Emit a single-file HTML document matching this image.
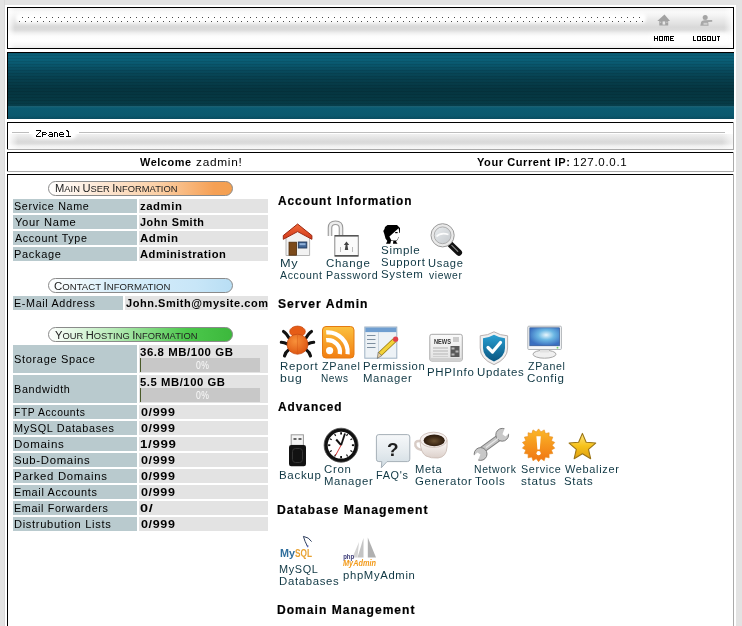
<!DOCTYPE html>
<html><head><meta charset="utf-8"><title>ZPanel</title>
<style>html,body{margin:0;padding:0;width:742px;height:626px;overflow:hidden;background:#e3e3e3}svg{display:block;will-change:transform}</style>
</head><body><svg width="742" height="626" viewBox="0 0 742 626" font-family='"Liberation Sans", sans-serif'><defs><linearGradient id="gTop" gradientUnits="userSpaceOnUse" x1="0" y1="8" x2="0" y2="48">
<stop offset="0" stop-color="#f0f0f0"/><stop offset="0.1" stop-color="#f9f9f9"/><stop offset="0.2" stop-color="#f3f3f3"/>
<stop offset="0.3" stop-color="#e9e9e9"/><stop offset="0.4" stop-color="#e1e1e1"/><stop offset="0.48" stop-color="#d9d9d9"/>
<stop offset="0.55" stop-color="#dcdcdc"/><stop offset="0.62" stop-color="#efefef"/><stop offset="0.7" stop-color="#fcfcfc"/>
<stop offset="0.82" stop-color="#fff"/><stop offset="0.92" stop-color="#f8f8f8"/><stop offset="1" stop-color="#ececec"/></linearGradient>
<filter id="fBlur2" x="-5%" y="-60%" width="110%" height="220%"><feGaussianBlur stdDeviation="1.4"/></filter>
<linearGradient id="gTopL" x1="0" y1="0" x2="1" y2="0"><stop offset="0" stop-color="#fff" stop-opacity="0.9"/><stop offset="1" stop-color="#fff" stop-opacity="0"/></linearGradient>
<linearGradient id="gTopR" x1="0" y1="0" x2="1" y2="0"><stop offset="0" stop-color="#fff" stop-opacity="0"/><stop offset="1" stop-color="#fff" stop-opacity="0.85"/></linearGradient><pattern id="pDots" x="0" y="0" width="6" height="5" patternUnits="userSpaceOnUse">
<rect x="4" y="2" width="1" height="1" fill="#555"/><rect x="1" y="1" width="1" height="1" fill="#555" transform="translate(0,0)"/></pattern><linearGradient id="gBan" gradientUnits="userSpaceOnUse" x1="0" y1="53" x2="0" y2="119">
<stop offset="0" stop-color="#0a566c"/><stop offset="0.03" stop-color="#0b617a"/><stop offset="0.1" stop-color="#0a5f77"/>
<stop offset="0.18" stop-color="#09566c"/><stop offset="0.26" stop-color="#084b5e"/><stop offset="0.38" stop-color="#07404f"/>
<stop offset="0.56" stop-color="#053540"/><stop offset="0.71" stop-color="#063843"/><stop offset="0.8" stop-color="#073e4b"/>
<stop offset="0.81" stop-color="#1d687d"/><stop offset="0.83" stop-color="#0b5b72"/><stop offset="0.95" stop-color="#0a586e"/><stop offset="1" stop-color="#094c60"/></linearGradient>
<pattern id="pStripe" x="0" y="53" width="4" height="3" patternUnits="userSpaceOnUse"><rect x="0" y="2" width="4" height="1" fill="#000" fill-opacity="0.09"/></pattern><linearGradient id="gCr" gradientUnits="userSpaceOnUse" x1="0" y1="123" x2="0" y2="149">
<stop offset="0" stop-color="#fdfdfd"/><stop offset="0.38" stop-color="#fff"/><stop offset="0.42" stop-color="#fff"/>
<stop offset="0.44" stop-color="#efefef"/><stop offset="0.6" stop-color="#e2e2e2"/><stop offset="0.72" stop-color="#d9d9d9"/>
<stop offset="0.8" stop-color="#dddddd"/><stop offset="0.88" stop-color="#f0f0f0"/><stop offset="1" stop-color="#f7f7f7"/></linearGradient><filter id="fBlur" x="-20%" y="-50%" width="140%" height="200%"><feGaussianBlur stdDeviation="1.6"/></filter><linearGradient id="gFadeL" x1="0" y1="0" x2="1" y2="0"><stop offset="0" stop-color="#fff" stop-opacity="1"/><stop offset="1" stop-color="#fff" stop-opacity="0"/></linearGradient><linearGradient id="gFadeR" x1="0" y1="0" x2="1" y2="0"><stop offset="0" stop-color="#fff" stop-opacity="0"/><stop offset="1" stop-color="#fff" stop-opacity="0.7"/></linearGradient><linearGradient id="gOr" x1="0" y1="0" x2="1" y2="0"><stop offset="0" stop-color="#fff"/><stop offset="0.3" stop-color="#fde6d2"/><stop offset="0.6" stop-color="#fbcfa5"/><stop offset="0.9" stop-color="#f5a055"/><stop offset="1" stop-color="#f4a050"/></linearGradient>
<linearGradient id="gBl" x1="0" y1="0" x2="1" y2="0"><stop offset="0" stop-color="#fff"/><stop offset="0.35" stop-color="#d8eefa"/><stop offset="0.8" stop-color="#c8e6f8"/><stop offset="1" stop-color="#b8def4"/></linearGradient>
<linearGradient id="gGr" x1="0" y1="0" x2="1" y2="0"><stop offset="0" stop-color="#fff"/><stop offset="0.35" stop-color="#b8ecb8"/><stop offset="0.75" stop-color="#4cc84c"/><stop offset="1" stop-color="#3cb83c"/></linearGradient>
<linearGradient id="gRoof" x1="0" y1="0" x2="0" y2="1"><stop offset="0" stop-color="#f06a3a"/><stop offset="1" stop-color="#d2381a"/></linearGradient>
<linearGradient id="gLens" x1="0" y1="0" x2="1" y2="1"><stop offset="0" stop-color="#eef0f2"/><stop offset="0.5" stop-color="#d6dadd"/><stop offset="1" stop-color="#c2c6ca"/></linearGradient>
<radialGradient id="gBug" cx="0.4" cy="0.35" r="0.7"><stop offset="0" stop-color="#f8913a"/><stop offset="1" stop-color="#dd5410"/></radialGradient>
<linearGradient id="gRss" x1="0" y1="0" x2="0" y2="1"><stop offset="0" stop-color="#fbc13e"/><stop offset="1" stop-color="#f27e12"/></linearGradient>
<linearGradient id="gShield" x1="0" y1="0" x2="0" y2="1"><stop offset="0" stop-color="#2a9fd2"/><stop offset="1" stop-color="#0a5580"/></linearGradient>
<radialGradient id="gScreen" cx="0.55" cy="0.4" r="0.6"><stop offset="0" stop-color="#e8f6fc"/><stop offset="0.45" stop-color="#6cb8e4"/><stop offset="1" stop-color="#3a6fc0"/></radialGradient>
<linearGradient id="gBubble" x1="0" y1="0" x2="0" y2="1"><stop offset="0" stop-color="#f6f8fa"/><stop offset="0.55" stop-color="#e4eaee"/><stop offset="1" stop-color="#cfdbe2"/></linearGradient>
<linearGradient id="gBurst" x1="0" y1="0" x2="0" y2="1"><stop offset="0" stop-color="#fbb828"/><stop offset="1" stop-color="#f07412"/></linearGradient>
<linearGradient id="gStar" x1="0" y1="0" x2="0" y2="1"><stop offset="0" stop-color="#ffe680"/><stop offset="0.5" stop-color="#f6c21a"/><stop offset="1" stop-color="#e0a010"/></linearGradient>
<radialGradient id="gCoffee" cx="0.5" cy="0.55" r="0.55"><stop offset="0" stop-color="#6a5030"/><stop offset="0.7" stop-color="#3a2614"/><stop offset="1" stop-color="#2a1a0c"/></radialGradient>
<linearGradient id="gCup" x1="0" y1="0" x2="0" y2="1"><stop offset="0" stop-color="#fdfbfa"/><stop offset="1" stop-color="#dcd0ca"/></linearGradient>
<linearGradient id="gPaper" x1="0" y1="0" x2="0" y2="1"><stop offset="0" stop-color="#fafafa"/><stop offset="1" stop-color="#e2e2e2"/></linearGradient>
</defs><rect x="0" y="0" width="742" height="626" fill="#e3e3e3" />
<rect x="4" y="0" width="1" height="626" fill="#d9d9d9" />
<rect x="5" y="5" width="731" height="626" fill="#fff" />
<rect x="7" y="7" width="727" height="42" fill="#000" />
<rect x="8" y="8" width="725" height="40" fill="url(#gTop)" />
<rect x="16" y="13.5" width="630" height="9.5" rx="4" fill="#fff" filter="url(#fBlur2)"/>
<rect x="649" y="33" width="80" height="13" rx="5" fill="#fff" opacity="0.7" filter="url(#fBlur2)"/>
<rect x="8" y="8" width="7" height="40" fill="url(#gTopL)" />
<rect x="724" y="8" width="9" height="40" fill="url(#gTopR)" />
<g fill="#4a4a4a">
<rect x="22" y="17" width="1" height="1"/>
<rect x="19" y="21" width="1" height="1"/>
<rect x="28" y="17" width="1" height="1"/>
<rect x="25" y="21" width="1" height="1"/>
<rect x="34" y="17" width="1" height="1"/>
<rect x="31" y="21" width="1" height="1"/>
<rect x="40" y="17" width="1" height="1"/>
<rect x="37" y="21" width="1" height="1"/>
<rect x="46" y="17" width="1" height="1"/>
<rect x="43" y="21" width="1" height="1"/>
<rect x="52" y="17" width="1" height="1"/>
<rect x="49" y="21" width="1" height="1"/>
<rect x="58" y="17" width="1" height="1"/>
<rect x="55" y="21" width="1" height="1"/>
<rect x="64" y="17" width="1" height="1"/>
<rect x="61" y="21" width="1" height="1"/>
<rect x="70" y="17" width="1" height="1"/>
<rect x="67" y="21" width="1" height="1"/>
<rect x="76" y="17" width="1" height="1"/>
<rect x="73" y="21" width="1" height="1"/>
<rect x="82" y="17" width="1" height="1"/>
<rect x="79" y="21" width="1" height="1"/>
<rect x="88" y="17" width="1" height="1"/>
<rect x="85" y="21" width="1" height="1"/>
<rect x="94" y="17" width="1" height="1"/>
<rect x="91" y="21" width="1" height="1"/>
<rect x="100" y="17" width="1" height="1"/>
<rect x="97" y="21" width="1" height="1"/>
<rect x="106" y="17" width="1" height="1"/>
<rect x="103" y="21" width="1" height="1"/>
<rect x="112" y="17" width="1" height="1"/>
<rect x="109" y="21" width="1" height="1"/>
<rect x="118" y="17" width="1" height="1"/>
<rect x="115" y="21" width="1" height="1"/>
<rect x="124" y="17" width="1" height="1"/>
<rect x="121" y="21" width="1" height="1"/>
<rect x="130" y="17" width="1" height="1"/>
<rect x="127" y="21" width="1" height="1"/>
<rect x="136" y="17" width="1" height="1"/>
<rect x="133" y="21" width="1" height="1"/>
<rect x="142" y="17" width="1" height="1"/>
<rect x="139" y="21" width="1" height="1"/>
<rect x="148" y="17" width="1" height="1"/>
<rect x="145" y="21" width="1" height="1"/>
<rect x="154" y="17" width="1" height="1"/>
<rect x="151" y="21" width="1" height="1"/>
<rect x="160" y="17" width="1" height="1"/>
<rect x="157" y="21" width="1" height="1"/>
<rect x="166" y="17" width="1" height="1"/>
<rect x="163" y="21" width="1" height="1"/>
<rect x="172" y="17" width="1" height="1"/>
<rect x="169" y="21" width="1" height="1"/>
<rect x="178" y="17" width="1" height="1"/>
<rect x="175" y="21" width="1" height="1"/>
<rect x="184" y="17" width="1" height="1"/>
<rect x="181" y="21" width="1" height="1"/>
<rect x="190" y="17" width="1" height="1"/>
<rect x="187" y="21" width="1" height="1"/>
<rect x="196" y="17" width="1" height="1"/>
<rect x="193" y="21" width="1" height="1"/>
<rect x="202" y="17" width="1" height="1"/>
<rect x="199" y="21" width="1" height="1"/>
<rect x="208" y="17" width="1" height="1"/>
<rect x="205" y="21" width="1" height="1"/>
<rect x="214" y="17" width="1" height="1"/>
<rect x="211" y="21" width="1" height="1"/>
<rect x="220" y="17" width="1" height="1"/>
<rect x="217" y="21" width="1" height="1"/>
<rect x="226" y="17" width="1" height="1"/>
<rect x="223" y="21" width="1" height="1"/>
<rect x="232" y="17" width="1" height="1"/>
<rect x="229" y="21" width="1" height="1"/>
<rect x="238" y="17" width="1" height="1"/>
<rect x="235" y="21" width="1" height="1"/>
<rect x="244" y="17" width="1" height="1"/>
<rect x="241" y="21" width="1" height="1"/>
<rect x="250" y="17" width="1" height="1"/>
<rect x="247" y="21" width="1" height="1"/>
<rect x="256" y="17" width="1" height="1"/>
<rect x="253" y="21" width="1" height="1"/>
<rect x="262" y="17" width="1" height="1"/>
<rect x="259" y="21" width="1" height="1"/>
<rect x="268" y="17" width="1" height="1"/>
<rect x="265" y="21" width="1" height="1"/>
<rect x="274" y="17" width="1" height="1"/>
<rect x="271" y="21" width="1" height="1"/>
<rect x="280" y="17" width="1" height="1"/>
<rect x="277" y="21" width="1" height="1"/>
<rect x="286" y="17" width="1" height="1"/>
<rect x="283" y="21" width="1" height="1"/>
<rect x="292" y="17" width="1" height="1"/>
<rect x="289" y="21" width="1" height="1"/>
<rect x="298" y="17" width="1" height="1"/>
<rect x="295" y="21" width="1" height="1"/>
<rect x="304" y="17" width="1" height="1"/>
<rect x="301" y="21" width="1" height="1"/>
<rect x="310" y="17" width="1" height="1"/>
<rect x="307" y="21" width="1" height="1"/>
<rect x="316" y="17" width="1" height="1"/>
<rect x="313" y="21" width="1" height="1"/>
<rect x="322" y="17" width="1" height="1"/>
<rect x="319" y="21" width="1" height="1"/>
<rect x="328" y="17" width="1" height="1"/>
<rect x="325" y="21" width="1" height="1"/>
<rect x="334" y="17" width="1" height="1"/>
<rect x="331" y="21" width="1" height="1"/>
<rect x="340" y="17" width="1" height="1"/>
<rect x="337" y="21" width="1" height="1"/>
<rect x="346" y="17" width="1" height="1"/>
<rect x="343" y="21" width="1" height="1"/>
<rect x="352" y="17" width="1" height="1"/>
<rect x="349" y="21" width="1" height="1"/>
<rect x="358" y="17" width="1" height="1"/>
<rect x="355" y="21" width="1" height="1"/>
<rect x="364" y="17" width="1" height="1"/>
<rect x="361" y="21" width="1" height="1"/>
<rect x="370" y="17" width="1" height="1"/>
<rect x="367" y="21" width="1" height="1"/>
<rect x="376" y="17" width="1" height="1"/>
<rect x="373" y="21" width="1" height="1"/>
<rect x="382" y="17" width="1" height="1"/>
<rect x="379" y="21" width="1" height="1"/>
<rect x="388" y="17" width="1" height="1"/>
<rect x="385" y="21" width="1" height="1"/>
<rect x="394" y="17" width="1" height="1"/>
<rect x="391" y="21" width="1" height="1"/>
<rect x="400" y="17" width="1" height="1"/>
<rect x="397" y="21" width="1" height="1"/>
<rect x="406" y="17" width="1" height="1"/>
<rect x="403" y="21" width="1" height="1"/>
<rect x="412" y="17" width="1" height="1"/>
<rect x="409" y="21" width="1" height="1"/>
<rect x="418" y="17" width="1" height="1"/>
<rect x="415" y="21" width="1" height="1"/>
<rect x="424" y="17" width="1" height="1"/>
<rect x="421" y="21" width="1" height="1"/>
<rect x="430" y="17" width="1" height="1"/>
<rect x="427" y="21" width="1" height="1"/>
<rect x="436" y="17" width="1" height="1"/>
<rect x="433" y="21" width="1" height="1"/>
<rect x="442" y="17" width="1" height="1"/>
<rect x="439" y="21" width="1" height="1"/>
<rect x="448" y="17" width="1" height="1"/>
<rect x="445" y="21" width="1" height="1"/>
<rect x="454" y="17" width="1" height="1"/>
<rect x="451" y="21" width="1" height="1"/>
<rect x="460" y="17" width="1" height="1"/>
<rect x="457" y="21" width="1" height="1"/>
<rect x="466" y="17" width="1" height="1"/>
<rect x="463" y="21" width="1" height="1"/>
<rect x="472" y="17" width="1" height="1"/>
<rect x="469" y="21" width="1" height="1"/>
<rect x="478" y="17" width="1" height="1"/>
<rect x="475" y="21" width="1" height="1"/>
<rect x="484" y="17" width="1" height="1"/>
<rect x="481" y="21" width="1" height="1"/>
<rect x="490" y="17" width="1" height="1"/>
<rect x="487" y="21" width="1" height="1"/>
<rect x="496" y="17" width="1" height="1"/>
<rect x="493" y="21" width="1" height="1"/>
<rect x="502" y="17" width="1" height="1"/>
<rect x="499" y="21" width="1" height="1"/>
<rect x="508" y="17" width="1" height="1"/>
<rect x="505" y="21" width="1" height="1"/>
<rect x="514" y="17" width="1" height="1"/>
<rect x="511" y="21" width="1" height="1"/>
<rect x="520" y="17" width="1" height="1"/>
<rect x="517" y="21" width="1" height="1"/>
<rect x="526" y="17" width="1" height="1"/>
<rect x="523" y="21" width="1" height="1"/>
<rect x="532" y="17" width="1" height="1"/>
<rect x="529" y="21" width="1" height="1"/>
<rect x="538" y="17" width="1" height="1"/>
<rect x="535" y="21" width="1" height="1"/>
<rect x="544" y="17" width="1" height="1"/>
<rect x="541" y="21" width="1" height="1"/>
<rect x="550" y="17" width="1" height="1"/>
<rect x="547" y="21" width="1" height="1"/>
<rect x="556" y="17" width="1" height="1"/>
<rect x="553" y="21" width="1" height="1"/>
<rect x="561" y="17" width="1" height="1"/>
<rect x="559" y="21" width="1" height="1"/>
<rect x="567" y="17" width="1" height="1"/>
<rect x="564" y="21" width="1" height="1"/>
<rect x="573" y="17" width="1" height="1"/>
<rect x="570" y="21" width="1" height="1"/>
<rect x="579" y="17" width="1" height="1"/>
<rect x="576" y="21" width="1" height="1"/>
<rect x="585" y="17" width="1" height="1"/>
<rect x="582" y="21" width="1" height="1"/>
<rect x="591" y="17" width="1" height="1"/>
<rect x="588" y="21" width="1" height="1"/>
<rect x="597" y="17" width="1" height="1"/>
<rect x="594" y="21" width="1" height="1"/>
<rect x="603" y="17" width="1" height="1"/>
<rect x="600" y="21" width="1" height="1"/>
<rect x="609" y="17" width="1" height="1"/>
<rect x="606" y="21" width="1" height="1"/>
<rect x="615" y="17" width="1" height="1"/>
<rect x="612" y="21" width="1" height="1"/>
<rect x="621" y="17" width="1" height="1"/>
<rect x="618" y="21" width="1" height="1"/>
<rect x="627" y="17" width="1" height="1"/>
<rect x="624" y="21" width="1" height="1"/>
<rect x="633" y="17" width="1" height="1"/>
<rect x="630" y="21" width="1" height="1"/>
<rect x="639" y="17" width="1" height="1"/>
<rect x="636" y="21" width="1" height="1"/>
<rect x="642" y="21" width="1" height="1"/>
</g>
<rect x="7" y="52" width="727" height="67" fill="#000" />
<rect x="8" y="53" width="726" height="66" fill="url(#gBan)" />
<rect x="8" y="53" width="726" height="54" fill="url(#pStripe)" />
<rect x="7" y="122" width="727" height="28" fill="#aaa" />
<rect x="7" y="122" width="726" height="27" fill="#000" />
<rect x="8" y="123" width="725" height="26" fill="url(#gCr)" />
<rect x="31" y="126" width="46" height="13" rx="6" fill="#fff" filter="url(#fBlur)"/>
<rect x="8" y="123" width="10" height="26" fill="url(#gFadeL)" />
<rect x="722" y="123" width="11" height="26" fill="url(#gFadeR)" />
<rect x="12" y="132" width="17" height="1" fill="#bdbdbd" />
<rect x="79" y="132" width="646" height="1" fill="#bdbdbd" />
<rect x="8" y="133" width="725" height="1" fill="#fff" />
<rect x="7" y="152" width="727" height="20" fill="#aaa" />
<rect x="7" y="152" width="726" height="19" fill="#000" />
<rect x="8" y="153" width="725" height="18" fill="#fff" />
<rect x="7" y="174" width="727" height="460" fill="#aaa" />
<rect x="7" y="174" width="726" height="459" fill="#000" />
<rect x="8" y="175" width="725" height="458" fill="#fff" />
<rect x="48.5" y="181.5" width="184" height="14" rx="7" ry="7" fill="url(#gOr)" stroke="#8a8a8a" stroke-width="1"/>
<rect x="48.5" y="278.5" width="184" height="14" rx="7" ry="7" fill="url(#gBl)" stroke="#8a8a8a" stroke-width="1"/>
<rect x="48.5" y="327.5" width="184" height="14" rx="7" ry="7" fill="url(#gGr)" stroke="#8a8a8a" stroke-width="1"/>
<rect x="13" y="199" width="124" height="14" fill="#b9cace" />
<rect x="139" y="199" width="129" height="14" fill="#e3e3e3" />
<rect x="13" y="215" width="124" height="14" fill="#b9cace" />
<rect x="139" y="215" width="129" height="14" fill="#e3e3e3" />
<rect x="13" y="231" width="124" height="14" fill="#b9cace" />
<rect x="139" y="231" width="129" height="14" fill="#e3e3e3" />
<rect x="13" y="247" width="124" height="14" fill="#b9cace" />
<rect x="139" y="247" width="129" height="14" fill="#e3e3e3" />
<rect x="13" y="296" width="110" height="14" fill="#b9cace" />
<rect x="125" y="296" width="143" height="14" fill="#e3e3e3" />
<rect x="13" y="345" width="124" height="28" fill="#b9cace" />
<rect x="139" y="345" width="129" height="28" fill="#e3e3e3" />
<rect x="13" y="375" width="124" height="28" fill="#b9cace" />
<rect x="139" y="375" width="129" height="28" fill="#e3e3e3" />
<rect x="140" y="358" width="120" height="14" fill="#c8c8c8" />
<rect x="140" y="358" width="1" height="14" fill="#4a5a2a" />
<rect x="140" y="388" width="120" height="14" fill="#c8c8c8" />
<rect x="140" y="388" width="1" height="14" fill="#4a5a2a" />
<rect x="13" y="405" width="124" height="14" fill="#b9cace" />
<rect x="139" y="405" width="129" height="14" fill="#e3e3e3" />
<rect x="13" y="421" width="124" height="14" fill="#b9cace" />
<rect x="139" y="421" width="129" height="14" fill="#e3e3e3" />
<rect x="13" y="437" width="124" height="14" fill="#b9cace" />
<rect x="139" y="437" width="129" height="14" fill="#e3e3e3" />
<rect x="13" y="453" width="124" height="14" fill="#b9cace" />
<rect x="139" y="453" width="129" height="14" fill="#e3e3e3" />
<rect x="13" y="469" width="124" height="14" fill="#b9cace" />
<rect x="139" y="469" width="129" height="14" fill="#e3e3e3" />
<rect x="13" y="485" width="124" height="14" fill="#b9cace" />
<rect x="139" y="485" width="129" height="14" fill="#e3e3e3" />
<rect x="13" y="501" width="124" height="14" fill="#b9cace" />
<rect x="139" y="501" width="129" height="14" fill="#e3e3e3" />
<rect x="13" y="517" width="124" height="14" fill="#b9cace" />
<rect x="139" y="517" width="129" height="14" fill="#e3e3e3" />
<polygon points="286,237 297.6,228 309.6,237 309.6,255.5 286,255.5" fill="#f2f2f2" stroke="#b4b4b4" stroke-width="1"/>
<rect x="289" y="242.2" width="7.5" height="13" fill="#7c4a1a" stroke="#4e2c0c" stroke-width="0.8"/>
<rect x="298.3" y="242" width="8.5" height="6" fill="#3f6596" stroke="#23385a" stroke-width="0.9"/>
<rect x="299.5" y="243.2" width="6" height="2" fill="#8fb0d8"/>
<polygon points="283.3,235.5 297.6,224 311.9,235.5 311.9,239.3 297.6,231.6 283.3,239.3" fill="url(#gRoof)" stroke="#9a2812" stroke-width="1" stroke-linejoin="round"/>
<path d="M330,236 V228 Q330,222.8 335.5,222.8 Q341,222.8 341,228 V236" fill="none" stroke="#9a9a9a" stroke-width="4.6"/>
<path d="M330,236 V228 Q330,222.8 335.5,222.8 Q341,222.8 341,228 V236" fill="none" stroke="#ececec" stroke-width="2.4"/>
<rect x="334.8" y="235.5" width="23.5" height="20.5" fill="#fbfbfb" stroke="#8a8a8a" stroke-width="1"/>
<rect x="334.8" y="235" width="23.5" height="1.6" fill="#555"/>
<rect x="334.8" y="255" width="23.5" height="1.6" fill="#555"/>
<polygon points="346.5,241.5 343.8,245 345.6,245 344.8,250 348.2,250 347.4,245 349.2,245" fill="#444"/>
<rect x="340" y="247" width="1" height="5" fill="#bbb"/><rect x="352" y="247" width="1" height="5" fill="#bbb"/>
<path d="M387.5,225 H397 L400,228 V232.5 L398.5,233.5 L398.5,238 L397,240.5 L396,241.5 L397.5,243.8 L393,243.8 L393.3,241 L391,241 L390.3,243.8 L386,243.8 L387.3,241 L385.5,238.5 L384.3,234 L383.3,231 L384.5,229 L385,227 Z" fill="#000"/>
<path d="M398.6,228.2 L389.4,236.4 L391.4,240.6 L396.6,240.6 L397.9,238.6 L398.3,237.2 L400.4,235.7 L399.3,233.9 L399.1,231 Z" fill="#fff"/>
<rect x="395.2" y="232" width="2.4" height="1.2" fill="#000"/>
<line x1="451" y1="245" x2="458.8" y2="252.5" stroke="#111" stroke-width="6.5" stroke-linecap="round"/>
<line x1="451.8" y1="245.3" x2="457.8" y2="251.3" stroke="#888" stroke-width="1.2" stroke-linecap="round"/>
<circle cx="442.6" cy="235.3" r="10" fill="url(#gLens)" stroke="#e9e9e9" stroke-width="3"/>
<circle cx="442.6" cy="235.3" r="11.6" fill="none" stroke="#9a9a9a" stroke-width="1"/>
<circle cx="442.6" cy="235.3" r="8.4" fill="none" stroke="#a8a8a8" stroke-width="0.9"/>
<path d="M436.5,236.5 Q441,232 448.5,234.5" fill="none" stroke="#fff" stroke-width="1.6" opacity="0.9"/>
<g stroke="#111" stroke-width="3.1" stroke-linecap="round" fill="none"><path d="M283.5,331.5 Q286,333 289,338"/><path d="M281.3,342.3 Q284,342.5 287.5,344"/><path d="M284.5,356 Q285.5,352 289,349.5"/><path d="M311.5,331.5 Q309,333 306,338"/><path d="M313.7,342.3 Q311,342.5 307.5,344"/><path d="M310.5,356 Q309.5,352 306,349.5"/></g>
<ellipse cx="297.5" cy="331.5" rx="7.8" ry="5.4" fill="#e65c16" stroke="#c84810" stroke-width="0.8"/>
<ellipse cx="297.5" cy="344.2" rx="10.5" ry="10" fill="url(#gBug)" stroke="#c64a10" stroke-width="0.8"/>
<path d="M297.5,335 V353" stroke="#d05010" stroke-width="0.6" opacity="0.6"/>
<rect x="322.5" y="326.5" width="31.5" height="31.5" rx="3.5" fill="url(#gRss)" stroke="#e47a12" stroke-width="1"/>
<circle cx="329.6" cy="350.6" r="3.6" fill="#fff"/>
<path d="M326.2,340.2 A12,12 0 0 1 339.8,354.2" fill="none" stroke="#fff" stroke-width="4.2"/>
<path d="M326.2,332.4 A20,20 0 0 1 347.6,354.2" fill="none" stroke="#fff" stroke-width="4.2"/>
<rect x="364.8" y="327" width="32" height="31.2" fill="#edf2f6" stroke="#9fb1c4" stroke-width="1"/>
<rect x="365.3" y="327.5" width="31" height="4.6" fill="#6f9ed0"/>
<line x1="378.5" y1="332" x2="378.5" y2="357.7" stroke="#c8d4de" stroke-width="1"/>
<g stroke="#7d8fa0" stroke-width="1"><line x1="367" y1="335.5" x2="375.5" y2="335.5"/><line x1="367" y1="339.5" x2="375.5" y2="339.5"/><line x1="367" y1="343.5" x2="375.5" y2="343.5"/><line x1="367" y1="347.5" x2="375.5" y2="347.5"/></g>
<line x1="380" y1="354" x2="394.5" y2="340.3" stroke="#9a7a10" stroke-width="5" stroke-linecap="butt"/>
<line x1="380" y1="354" x2="394.5" y2="340.3" stroke="#f2d23a" stroke-width="3.4"/>
<polygon points="377.3,358.4 378.2,352.2 381.8,355.6" fill="#e8d0a0" stroke="#555" stroke-width="0.6"/>
<circle cx="395.6" cy="339.2" r="2.6" fill="#e0404a"/>
<rect x="429.8" y="334.3" width="32.5" height="26.8" rx="2" fill="url(#gPaper)" stroke="#a8a8a8" stroke-width="1"/>
<rect x="430.5" y="358" width="31" height="3" fill="#d0d0d0"/>
<text x="434" y="344.2" font-size="7.5" font-weight="bold" fill="#333" style="font-family:'Liberation Sans',sans-serif" textLength="17" lengthAdjust="spacingAndGlyphs">NEWS</text>
<rect x="453" y="337" width="6" height="5" fill="#ccc"/>
<rect x="450.5" y="346" width="9" height="11" fill="#5a5a5a"/>
<g fill="#b8b8b8"><rect x="451.5" y="347.5" width="3" height="2"/><rect x="455.5" y="350.5" width="3" height="2"/><rect x="451.5" y="353.5" width="3" height="2"/></g>
<g fill="#cfcfcf"><rect x="433" y="347" width="15" height="2"/><rect x="433" y="350" width="15" height="2"/><rect x="433" y="353" width="15" height="2"/><rect x="433" y="356" width="15" height="1"/></g>
<path d="M494,331.8 Q500,335.5 507.6,335.8 V348 Q507.6,359 494,364.6 Q480.2,359 480.2,348 V335.8 Q488,335.5 494,331.8 Z" fill="#f0f0f0" stroke="#b8b0b0" stroke-width="1"/>
<path d="M494,334.8 Q499.5,338 505,338.3 V348 Q505,357 494,361.6 Q483,357 483,348 V338.3 Q488.5,338 494,334.8 Z" fill="url(#gShield)"/>
<path d="M488,347.5 L492.5,352 L500.5,342.5" fill="none" stroke="#fff" stroke-width="3.2" stroke-linecap="round" stroke-linejoin="round"/>
<ellipse cx="544.5" cy="354.2" rx="11.5" ry="4" fill="#f0f0f0" stroke="#a8a8a8" stroke-width="1"/>
<rect x="540" y="349" width="9" height="3.5" fill="#e2e2e2"/>
<rect x="527.8" y="326.2" width="33.6" height="23.3" rx="1" fill="#f4f6f8" stroke="#b0b4b8" stroke-width="1"/>
<rect x="529.8" y="327.8" width="29.8" height="18" fill="url(#gScreen)" stroke="#2a4f8a" stroke-width="0.6"/>
<circle cx="557.5" cy="347.7" r="0.9" fill="#70d060"/>
<rect x="291.2" y="434.8" width="12.2" height="10.5" fill="#f4f4f4" stroke="#9a9a9a" stroke-width="1"/>
<rect x="293.5" y="438" width="3" height="2" fill="#666"/><rect x="298.5" y="438" width="3" height="2" fill="#666"/>
<rect x="289" y="445" width="17" height="21.2" rx="2.2" fill="#121212"/>
<rect x="292.5" y="448.5" width="10" height="14" rx="3" fill="none" stroke="#333" stroke-width="1"/>
<circle cx="341.1" cy="445.2" r="15.2" fill="#fff" stroke="#111" stroke-width="3.6"/>
<circle cx="341.1" cy="445.2" r="17" fill="none" stroke="#555" stroke-width="0.8"/>
<line x1="341.10" y1="434.40" x2="341.10" y2="432.20" stroke="#111" stroke-width="1.8"/>
<line x1="346.50" y1="435.85" x2="347.60" y2="433.94" stroke="#111" stroke-width="1.2"/>
<line x1="350.45" y1="439.80" x2="352.36" y2="438.70" stroke="#111" stroke-width="1.2"/>
<line x1="351.90" y1="445.20" x2="354.10" y2="445.20" stroke="#111" stroke-width="1.8"/>
<line x1="350.45" y1="450.60" x2="352.36" y2="451.70" stroke="#111" stroke-width="1.2"/>
<line x1="346.50" y1="454.55" x2="347.60" y2="456.46" stroke="#111" stroke-width="1.2"/>
<line x1="341.10" y1="456.00" x2="341.10" y2="458.20" stroke="#111" stroke-width="1.8"/>
<line x1="335.70" y1="454.55" x2="334.60" y2="456.46" stroke="#111" stroke-width="1.2"/>
<line x1="331.75" y1="450.60" x2="329.84" y2="451.70" stroke="#111" stroke-width="1.2"/>
<line x1="330.30" y1="445.20" x2="328.10" y2="445.20" stroke="#111" stroke-width="1.8"/>
<line x1="331.75" y1="439.80" x2="329.84" y2="438.70" stroke="#111" stroke-width="1.2"/>
<line x1="335.70" y1="435.85" x2="334.60" y2="433.94" stroke="#111" stroke-width="1.2"/>
<line x1="341.1" y1="445.2" x2="336.2" y2="439.5" stroke="#111" stroke-width="2"/>
<line x1="341.1" y1="445.2" x2="345" y2="433.5" stroke="#111" stroke-width="1.8"/>
<line x1="341.1" y1="445.2" x2="335.5" y2="455.5" stroke="#d02020" stroke-width="0.9"/>
<path d="M378.8,434.6 H407.4 Q409.8,434.6 409.8,437 V459.2 Q409.8,461.6 407.4,461.6 H387 L381.3,467.8 L381.8,461.6 H378.8 Q376.4,461.6 376.4,459.2 V437 Q376.4,434.6 378.8,434.6 Z" fill="url(#gBubble)" stroke="#a6b0b8" stroke-width="1"/>
<text x="392.8" y="455.6" font-size="19" font-weight="bold" fill="#1e1e1e" text-anchor="middle" style="font-family:'Liberation Sans',sans-serif">?</text>
<path d="M420,441 Q414,440.5 415.5,446 Q417.5,450 424,450" fill="none" stroke="#d8ccc6" stroke-width="2.6"/>
<path d="M420,440.5 Q420.5,453 426,456 Q431,458.5 438,458 Q446.5,457 447,447 L447.2,440.5 Z" fill="url(#gCup)" stroke="#c8b8b0" stroke-width="0.8"/>
<ellipse cx="433.6" cy="439.8" rx="13.4" ry="7.6" fill="#f6f0ee" stroke="#c8b8b0" stroke-width="0.8"/>
<ellipse cx="434.2" cy="440.4" rx="10.6" ry="5.8" fill="url(#gCoffee)"/>
<line x1="482" y1="450" x2="502" y2="435.5" stroke="#7e7e7e" stroke-width="7"/>
<line x1="482" y1="450" x2="502" y2="435.5" stroke="#c4c4c4" stroke-width="5"/>
<circle cx="502.2" cy="434.8" r="6.4" fill="#c8c8c8" stroke="#7e7e7e" stroke-width="1"/>
<circle cx="480.6" cy="454" r="6.4" fill="#c8c8c8" stroke="#7e7e7e" stroke-width="1"/>
<polygon points="502.5,434.2 505,427.5 511,431.5 505.5,436.5" fill="#fff"/>
<polygon points="480.4,454.6 477.5,461.5 472,457 477.5,452.5" fill="#fff"/>
<line x1="486" y1="447.5" x2="498" y2="438.5" stroke="#e8e8e8" stroke-width="1.2"/>
<polygon points="538.60,428.90 540.96,431.91 544.21,429.89 545.40,433.52 549.14,432.74 549.02,436.56 552.80,437.10 551.38,440.65 554.75,442.45 552.20,445.30 554.75,448.15 551.38,449.95 552.80,453.50 549.02,454.04 549.14,457.86 545.40,457.08 544.21,460.71 540.96,458.69 538.60,461.70 536.24,458.69 532.99,460.71 531.80,457.08 528.06,457.86 528.18,454.04 524.40,453.50 525.82,449.95 522.45,448.15 525.00,445.30 522.45,442.45 525.82,440.65 524.40,437.10 528.18,436.56 528.06,432.74 531.80,433.52 532.99,429.89 536.24,431.91" fill="url(#gBurst)" stroke="#e88a18" stroke-width="0.6"/>
<path d="M536.4,436.2 H540.8 L539.8,449.5 H537.4 Z" fill="#fff"/>
<circle cx="538.6" cy="453.2" r="2.1" fill="#fff"/>
<polygon points="582.40,433.40 586.16,442.22 595.71,443.07 588.49,449.38 590.63,458.73 582.40,453.80 574.17,458.73 576.31,449.38 569.09,443.07 578.64,442.22" fill="url(#gStar)" stroke="#9a7416" stroke-width="1.1" stroke-linejoin="round"/>
<path d="M303.4,536.4 Q309,537.2 311.6,541.6 M303.4,536.4 Q304.8,541.5 307.4,546.2" fill="none" stroke="#2e3e5e" stroke-width="1"/>
<path d="M306.2,545.6 L308.6,545.6 L308,547.8 Z" fill="#4a5ab0"/>
<text x="280" y="557.3" font-size="10.5" font-weight="bold" fill="#2f6e9c" style="font-family:'Liberation Sans',sans-serif" textLength="15" lengthAdjust="spacingAndGlyphs">My</text>
<text x="295" y="557.3" font-size="10.5" font-weight="bold" fill="#e8a232" style="font-family:'Liberation Sans',sans-serif" textLength="17" lengthAdjust="spacingAndGlyphs">SQL</text>
<polygon points="363.5,538 357.5,557.5 363.5,557.5" fill="#c4c4c4"/>
<polygon points="367.8,537.5 367.8,557.5 376,557.5" fill="#b0b0b0"/>
<polygon points="359,542 352.5,557.5 357.5,557.5" fill="#d4d4d4"/>
<text x="343.2" y="558.5" font-size="7" font-weight="bold" fill="#3a3a78" style="font-family:'Liberation Sans',sans-serif" textLength="11" lengthAdjust="spacingAndGlyphs">php</text>
<text x="343" y="565.6" font-size="8.5" font-weight="bold" font-style="italic" fill="#f29a1a" style="font-family:'Liberation Sans',sans-serif" textLength="33" lengthAdjust="spacingAndGlyphs">MyAdmin</text>
<polygon points="657.3,21 664.5,14.6 670,21 668.2,21 668.2,25.6 659.3,25.6 659.3,21" fill="#a2a2a2"/>
<rect x="662.6" y="21.4" width="2.6" height="3.2" fill="#e6e6e6"/>
<rect x="659.8" y="21.6" width="1.4" height="1.4" fill="#c4c4c4"/><rect x="666.2" y="21.6" width="1.4" height="1.4" fill="#c4c4c4"/>
<circle cx="705.2" cy="17.4" r="2.5" fill="#a4a4a4"/>
<path d="M700.3,25.8 L701.2,21.8 Q702,20.2 704.5,20.2 L712.2,19.9 L712.2,21.7 L708.2,22.1 L708.6,25.8 Z" fill="#a8a8a8"/>
<rect x="703.5" y="22.8" width="4" height="2" fill="#d0d0d0"/>
<g fill="#000" shape-rendering="crispEdges"><rect x="36" y="130" width="5" height="1"/><rect x="40" y="131" width="1" height="1"/><rect x="39" y="132" width="1" height="1"/><rect x="38" y="133" width="1" height="1"/><rect x="37" y="134" width="1" height="1"/><rect x="36" y="135" width="1" height="1"/><rect x="36" y="136" width="5" height="1"/></g>
<g fill="#000" shape-rendering="crispEdges"><rect x="42" y="132" width="4" height="1"/><rect x="42" y="133" width="1" height="1"/><rect x="46" y="133" width="1" height="1"/><rect x="42" y="134" width="4" height="1"/><rect x="42" y="135" width="1" height="1"/><rect x="42" y="136" width="1" height="1"/></g>
<g fill="#000" shape-rendering="crispEdges"><rect x="49" y="132" width="3" height="1"/><rect x="52" y="133" width="1" height="1"/><rect x="49" y="134" width="4" height="1"/><rect x="48" y="135" width="1" height="1"/><rect x="52" y="135" width="1" height="1"/><rect x="49" y="136" width="4" height="1"/></g>
<g fill="#000" shape-rendering="crispEdges"><rect x="54" y="132" width="3" height="1"/><rect x="54" y="133" width="1" height="1"/><rect x="57" y="133" width="1" height="1"/><rect x="54" y="134" width="1" height="1"/><rect x="57" y="134" width="1" height="1"/><rect x="54" y="135" width="1" height="1"/><rect x="57" y="135" width="1" height="1"/><rect x="54" y="136" width="1" height="1"/><rect x="57" y="136" width="1" height="1"/></g>
<g fill="#000" shape-rendering="crispEdges"><rect x="60" y="132" width="3" height="1"/><rect x="59" y="133" width="1" height="1"/><rect x="63" y="133" width="1" height="1"/><rect x="59" y="134" width="5" height="1"/><rect x="59" y="135" width="1" height="1"/><rect x="60" y="136" width="4" height="1"/></g>
<g fill="#000" shape-rendering="crispEdges"><rect x="66" y="130" width="2" height="1"/><rect x="67" y="131" width="2" height="1"/><rect x="68" y="132" width="1" height="1"/><rect x="68" y="133" width="1" height="1"/><rect x="68" y="134" width="1" height="1"/><rect x="68" y="135" width="1" height="1"/><rect x="66" y="136" width="5" height="1"/></g>
<g fill="#000" shape-rendering="crispEdges"><rect x="654" y="36" width="1" height="1"/><rect x="657" y="36" width="1" height="1"/><rect x="654" y="37" width="1" height="1"/><rect x="657" y="37" width="1" height="1"/><rect x="654" y="38" width="4" height="1"/><rect x="654" y="39" width="1" height="1"/><rect x="657" y="39" width="1" height="1"/><rect x="654" y="40" width="1" height="1"/><rect x="657" y="40" width="1" height="1"/></g>
<g fill="#000" shape-rendering="crispEdges"><rect x="659" y="36" width="4" height="1"/><rect x="659" y="37" width="1" height="1"/><rect x="662" y="37" width="1" height="1"/><rect x="659" y="38" width="1" height="1"/><rect x="662" y="38" width="1" height="1"/><rect x="659" y="39" width="1" height="1"/><rect x="662" y="39" width="1" height="1"/><rect x="659" y="40" width="4" height="1"/></g>
<g fill="#000" shape-rendering="crispEdges"><rect x="664" y="36" width="5" height="1"/><rect x="664" y="37" width="1" height="1"/><rect x="666" y="37" width="1" height="1"/><rect x="668" y="37" width="1" height="1"/><rect x="664" y="38" width="1" height="1"/><rect x="666" y="38" width="1" height="1"/><rect x="668" y="38" width="1" height="1"/><rect x="664" y="39" width="1" height="1"/><rect x="666" y="39" width="1" height="1"/><rect x="668" y="39" width="1" height="1"/><rect x="664" y="40" width="1" height="1"/><rect x="666" y="40" width="1" height="1"/><rect x="668" y="40" width="1" height="1"/></g>
<g fill="#000" shape-rendering="crispEdges"><rect x="670" y="36" width="4" height="1"/><rect x="670" y="37" width="1" height="1"/><rect x="670" y="38" width="3" height="1"/><rect x="670" y="39" width="1" height="1"/><rect x="670" y="40" width="4" height="1"/></g>
<g fill="#000" shape-rendering="crispEdges"><rect x="693" y="36" width="1" height="1"/><rect x="693" y="37" width="1" height="1"/><rect x="693" y="38" width="1" height="1"/><rect x="693" y="39" width="1" height="1"/><rect x="693" y="40" width="3" height="1"/></g>
<g fill="#000" shape-rendering="crispEdges"><rect x="697" y="36" width="4" height="1"/><rect x="697" y="37" width="1" height="1"/><rect x="700" y="37" width="1" height="1"/><rect x="697" y="38" width="1" height="1"/><rect x="700" y="38" width="1" height="1"/><rect x="697" y="39" width="1" height="1"/><rect x="700" y="39" width="1" height="1"/><rect x="697" y="40" width="4" height="1"/></g>
<g fill="#000" shape-rendering="crispEdges"><rect x="702" y="36" width="4" height="1"/><rect x="702" y="37" width="1" height="1"/><rect x="702" y="38" width="1" height="1"/><rect x="704" y="38" width="2" height="1"/><rect x="702" y="39" width="1" height="1"/><rect x="705" y="39" width="1" height="1"/><rect x="702" y="40" width="4" height="1"/></g>
<g fill="#000" shape-rendering="crispEdges"><rect x="707" y="36" width="4" height="1"/><rect x="707" y="37" width="1" height="1"/><rect x="710" y="37" width="1" height="1"/><rect x="707" y="38" width="1" height="1"/><rect x="710" y="38" width="1" height="1"/><rect x="707" y="39" width="1" height="1"/><rect x="710" y="39" width="1" height="1"/><rect x="707" y="40" width="4" height="1"/></g>
<g fill="#000" shape-rendering="crispEdges"><rect x="712" y="36" width="1" height="1"/><rect x="715" y="36" width="1" height="1"/><rect x="712" y="37" width="1" height="1"/><rect x="715" y="37" width="1" height="1"/><rect x="712" y="38" width="1" height="1"/><rect x="715" y="38" width="1" height="1"/><rect x="712" y="39" width="1" height="1"/><rect x="715" y="39" width="1" height="1"/><rect x="712" y="40" width="4" height="1"/></g>
<g fill="#000" shape-rendering="crispEdges"><rect x="717" y="36" width="3" height="1"/><rect x="718" y="37" width="1" height="1"/><rect x="718" y="38" width="1" height="1"/><rect x="718" y="39" width="1" height="1"/><rect x="718" y="40" width="1" height="1"/></g>
<text x="140.00" y="166" font-size="10" font-weight="bold" fill="#000" style='font-family:"Liberation Sans", sans-serif;' letter-spacing="0.5" textLength="51.50" lengthAdjust="spacingAndGlyphs">Welcome</text>
<text x="196.00" y="166" font-size="10" font-weight="normal" fill="#000" style='font-family:"Liberation Sans", sans-serif;' letter-spacing="0.6" textLength="46.50" lengthAdjust="spacingAndGlyphs">zadmin!</text>
<text x="477.00" y="166" font-size="10" font-weight="bold" fill="#000" style='font-family:"Liberation Sans", sans-serif;' letter-spacing="0.5" textLength="93.50" lengthAdjust="spacingAndGlyphs">Your Current IP:</text>
<text x="573.00" y="166" font-size="10" font-weight="normal" fill="#000" style='font-family:"Liberation Sans", sans-serif;' letter-spacing="0.6" textLength="54.50" lengthAdjust="spacingAndGlyphs">127.0.0.1</text>
<text x="55.00" y="192" font-size="10" font-weight="normal" fill="#222" style='font-family:"Liberation Sans", sans-serif;' textLength="122.50" lengthAdjust="spacingAndGlyphs"><tspan>M</tspan><tspan font-size="8.4">AIN</tspan><tspan font-size="8"> </tspan><tspan>U</tspan><tspan font-size="8.4">SER</tspan><tspan font-size="8"> </tspan><tspan>I</tspan><tspan font-size="8.4">NFORMATION</tspan></text>
<text x="54.00" y="290" font-size="10" font-weight="normal" fill="#222" style='font-family:"Liberation Sans", sans-serif;' textLength="116.50" lengthAdjust="spacingAndGlyphs"><tspan>C</tspan><tspan font-size="8.4">ONTACT</tspan><tspan font-size="8"> </tspan><tspan>I</tspan><tspan font-size="8.4">NFORMATION</tspan></text>
<text x="55.00" y="339" font-size="10" font-weight="normal" fill="#222" style='font-family:"Liberation Sans", sans-serif;' textLength="142.50" lengthAdjust="spacingAndGlyphs"><tspan>Y</tspan><tspan font-size="8.4">OUR</tspan><tspan font-size="8"> </tspan><tspan>H</tspan><tspan font-size="8.4">OSTING</tspan><tspan font-size="8"> </tspan><tspan>I</tspan><tspan font-size="8.4">NFORMATION</tspan></text>
<text x="14.00" y="210" font-size="10" font-weight="normal" fill="#000" style='font-family:"Liberation Sans", sans-serif;' letter-spacing="0.6" textLength="75.50" lengthAdjust="spacingAndGlyphs">Service Name</text>
<text x="15.00" y="226" font-size="10" font-weight="normal" fill="#000" style='font-family:"Liberation Sans", sans-serif;' letter-spacing="0.6" textLength="61.50" lengthAdjust="spacingAndGlyphs">Your Name</text>
<text x="15.00" y="242" font-size="10" font-weight="normal" fill="#000" style='font-family:"Liberation Sans", sans-serif;' letter-spacing="0.6" textLength="72.50" lengthAdjust="spacingAndGlyphs">Account Type</text>
<text x="14.00" y="258" font-size="10" font-weight="normal" fill="#000" style='font-family:"Liberation Sans", sans-serif;' letter-spacing="0.6" textLength="47.50" lengthAdjust="spacingAndGlyphs">Package</text>
<text x="14.00" y="307" font-size="10" font-weight="normal" fill="#000" style='font-family:"Liberation Sans", sans-serif;' letter-spacing="0.6" textLength="81.50" lengthAdjust="spacingAndGlyphs">E-Mail Address</text>
<text x="14.00" y="363" font-size="10" font-weight="normal" fill="#000" style='font-family:"Liberation Sans", sans-serif;' letter-spacing="0.6" textLength="81.50" lengthAdjust="spacingAndGlyphs">Storage Space</text>
<text x="14.00" y="393" font-size="10" font-weight="normal" fill="#000" style='font-family:"Liberation Sans", sans-serif;' letter-spacing="0.6" textLength="56.50" lengthAdjust="spacingAndGlyphs">Bandwidth</text>
<text x="14.00" y="416" font-size="10" font-weight="normal" fill="#000" style='font-family:"Liberation Sans", sans-serif;' letter-spacing="0.6" textLength="71.50" lengthAdjust="spacingAndGlyphs">FTP Accounts</text>
<text x="14.00" y="432" font-size="10" font-weight="normal" fill="#000" style='font-family:"Liberation Sans", sans-serif;' letter-spacing="0.6" textLength="100.50" lengthAdjust="spacingAndGlyphs">MySQL Databases</text>
<text x="14.00" y="448" font-size="10" font-weight="normal" fill="#000" style='font-family:"Liberation Sans", sans-serif;' letter-spacing="0.6" textLength="50.50" lengthAdjust="spacingAndGlyphs">Domains</text>
<text x="14.00" y="464" font-size="10" font-weight="normal" fill="#000" style='font-family:"Liberation Sans", sans-serif;' letter-spacing="0.6" textLength="76.50" lengthAdjust="spacingAndGlyphs">Sub-Domains</text>
<text x="14.00" y="480" font-size="10" font-weight="normal" fill="#000" style='font-family:"Liberation Sans", sans-serif;' letter-spacing="0.6" textLength="93.50" lengthAdjust="spacingAndGlyphs">Parked Domains</text>
<text x="14.00" y="496" font-size="10" font-weight="normal" fill="#000" style='font-family:"Liberation Sans", sans-serif;' letter-spacing="0.6" textLength="83.50" lengthAdjust="spacingAndGlyphs">Email Accounts</text>
<text x="14.00" y="512" font-size="10" font-weight="normal" fill="#000" style='font-family:"Liberation Sans", sans-serif;' letter-spacing="0.6" textLength="94.50" lengthAdjust="spacingAndGlyphs">Email Forwarders</text>
<text x="14.00" y="528" font-size="10" font-weight="normal" fill="#000" style='font-family:"Liberation Sans", sans-serif;' letter-spacing="0.6" textLength="97.50" lengthAdjust="spacingAndGlyphs">Distrubution Lists</text>
<text x="140.00" y="210" font-size="10" font-weight="bold" fill="#000" style='font-family:"Liberation Sans", sans-serif;' letter-spacing="0.5" textLength="42.50" lengthAdjust="spacingAndGlyphs">zadmin</text>
<text x="140.00" y="226" font-size="10" font-weight="bold" fill="#000" style='font-family:"Liberation Sans", sans-serif;' letter-spacing="0.5" textLength="64.50" lengthAdjust="spacingAndGlyphs">John Smith</text>
<text x="140.00" y="242" font-size="10" font-weight="bold" fill="#000" style='font-family:"Liberation Sans", sans-serif;' letter-spacing="0.5" textLength="38.50" lengthAdjust="spacingAndGlyphs">Admin</text>
<text x="140.00" y="258" font-size="10" font-weight="bold" fill="#000" style='font-family:"Liberation Sans", sans-serif;' letter-spacing="0.5" textLength="86.50" lengthAdjust="spacingAndGlyphs">Administration</text>
<text x="126.00" y="307" font-size="10" font-weight="bold" fill="#000" style='font-family:"Liberation Sans", sans-serif;' letter-spacing="0.5" textLength="142.50" lengthAdjust="spacingAndGlyphs">John.Smith@mysite.com</text>
<text x="140.00" y="356" font-size="10" font-weight="bold" fill="#000" style='font-family:"Liberation Sans", sans-serif;' letter-spacing="0.5" textLength="93.50" lengthAdjust="spacingAndGlyphs">36.8 MB/100 GB</text>
<text x="140.00" y="386" font-size="10" font-weight="bold" fill="#000" style='font-family:"Liberation Sans", sans-serif;' letter-spacing="0.5" textLength="85.50" lengthAdjust="spacingAndGlyphs">5.5 MB/100 GB</text>
<text x="141.00" y="416" font-size="10" font-weight="bold" fill="#000" style='font-family:"Liberation Sans", sans-serif;' letter-spacing="0.5" textLength="34.50" lengthAdjust="spacingAndGlyphs">0/999</text>
<text x="141.00" y="432" font-size="10" font-weight="bold" fill="#000" style='font-family:"Liberation Sans", sans-serif;' letter-spacing="0.5" textLength="34.50" lengthAdjust="spacingAndGlyphs">0/999</text>
<text x="140.00" y="448" font-size="10" font-weight="bold" fill="#000" style='font-family:"Liberation Sans", sans-serif;' letter-spacing="0.5" textLength="36.50" lengthAdjust="spacingAndGlyphs">1/999</text>
<text x="141.00" y="464" font-size="10" font-weight="bold" fill="#000" style='font-family:"Liberation Sans", sans-serif;' letter-spacing="0.5" textLength="34.50" lengthAdjust="spacingAndGlyphs">0/999</text>
<text x="141.00" y="480" font-size="10" font-weight="bold" fill="#000" style='font-family:"Liberation Sans", sans-serif;' letter-spacing="0.5" textLength="34.50" lengthAdjust="spacingAndGlyphs">0/999</text>
<text x="141.00" y="496" font-size="10" font-weight="bold" fill="#000" style='font-family:"Liberation Sans", sans-serif;' letter-spacing="0.5" textLength="34.50" lengthAdjust="spacingAndGlyphs">0/999</text>
<text x="140.00" y="512" font-size="10" font-weight="bold" fill="#000" style='font-family:"Liberation Sans", sans-serif;' letter-spacing="0.5" textLength="13.50" lengthAdjust="spacingAndGlyphs">0/</text>
<text x="141.00" y="528" font-size="10" font-weight="bold" fill="#000" style='font-family:"Liberation Sans", sans-serif;' letter-spacing="0.5" textLength="34.50" lengthAdjust="spacingAndGlyphs">0/999</text>
<text x="196.00" y="369" font-size="10" font-weight="normal" fill="#fafafa" style='font-family:"Liberation Sans", sans-serif;' letter-spacing="0.6" textLength="13.50" lengthAdjust="spacingAndGlyphs">0%</text>
<text x="196.00" y="399" font-size="10" font-weight="normal" fill="#fafafa" style='font-family:"Liberation Sans", sans-serif;' letter-spacing="0.6" textLength="13.50" lengthAdjust="spacingAndGlyphs">0%</text>
<text x="278.00" y="205" font-size="12" font-weight="bold" fill="#000" style='font-family:"Liberation Sans", sans-serif;' letter-spacing="1" stroke="#000" stroke-width="0.2" textLength="134.50" lengthAdjust="spacingAndGlyphs">Account Information</text>
<text x="278.00" y="308" font-size="12" font-weight="bold" fill="#000" style='font-family:"Liberation Sans", sans-serif;' letter-spacing="1" stroke="#000" stroke-width="0.2" textLength="90.50" lengthAdjust="spacingAndGlyphs">Server Admin</text>
<text x="278.00" y="411" font-size="12" font-weight="bold" fill="#000" style='font-family:"Liberation Sans", sans-serif;' letter-spacing="1" stroke="#000" stroke-width="0.2" textLength="64.50" lengthAdjust="spacingAndGlyphs">Advanced</text>
<text x="277.00" y="514" font-size="12" font-weight="bold" fill="#000" style='font-family:"Liberation Sans", sans-serif;' letter-spacing="1" stroke="#000" stroke-width="0.2" textLength="151.50" lengthAdjust="spacingAndGlyphs">Database Management</text>
<text x="277.00" y="614" font-size="12" font-weight="bold" fill="#000" style='font-family:"Liberation Sans", sans-serif;' letter-spacing="1" stroke="#000" stroke-width="0.2" textLength="138.50" lengthAdjust="spacingAndGlyphs">Domain Management</text>
<text x="280.00" y="267" font-size="10" font-weight="normal" fill="#0f3743" style='font-family:"Liberation Sans", sans-serif;' letter-spacing="0.6" textLength="18.50" lengthAdjust="spacingAndGlyphs">My</text>
<text x="280.00" y="279" font-size="10" font-weight="normal" fill="#0f3743" style='font-family:"Liberation Sans", sans-serif;' letter-spacing="0.6" textLength="42.50" lengthAdjust="spacingAndGlyphs">Account</text>
<text x="326.00" y="267" font-size="10" font-weight="normal" fill="#0f3743" style='font-family:"Liberation Sans", sans-serif;' letter-spacing="0.6" textLength="44.50" lengthAdjust="spacingAndGlyphs">Change</text>
<text x="326.00" y="279" font-size="10" font-weight="normal" fill="#0f3743" style='font-family:"Liberation Sans", sans-serif;' letter-spacing="0.6" textLength="52.50" lengthAdjust="spacingAndGlyphs">Password</text>
<text x="381.00" y="254" font-size="10" font-weight="normal" fill="#0f3743" style='font-family:"Liberation Sans", sans-serif;' letter-spacing="0.6" textLength="39.50" lengthAdjust="spacingAndGlyphs">Simple</text>
<text x="381.00" y="266" font-size="10" font-weight="normal" fill="#0f3743" style='font-family:"Liberation Sans", sans-serif;' letter-spacing="0.6" textLength="44.50" lengthAdjust="spacingAndGlyphs">Support</text>
<text x="381.00" y="278" font-size="10" font-weight="normal" fill="#0f3743" style='font-family:"Liberation Sans", sans-serif;' letter-spacing="0.6" textLength="42.50" lengthAdjust="spacingAndGlyphs">System</text>
<text x="428.00" y="267" font-size="10" font-weight="normal" fill="#0f3743" style='font-family:"Liberation Sans", sans-serif;' letter-spacing="0.6" textLength="35.50" lengthAdjust="spacingAndGlyphs">Usage</text>
<text x="429.00" y="279" font-size="10" font-weight="normal" fill="#0f3743" style='font-family:"Liberation Sans", sans-serif;' letter-spacing="0.6" textLength="33.50" lengthAdjust="spacingAndGlyphs">viewer</text>
<text x="280.00" y="370" font-size="10" font-weight="normal" fill="#0f3743" style='font-family:"Liberation Sans", sans-serif;' letter-spacing="0.6" textLength="38.50" lengthAdjust="spacingAndGlyphs">Report</text>
<text x="280.00" y="382" font-size="10" font-weight="normal" fill="#0f3743" style='font-family:"Liberation Sans", sans-serif;' letter-spacing="0.6" textLength="22.50" lengthAdjust="spacingAndGlyphs">bug</text>
<text x="322.00" y="370" font-size="10" font-weight="normal" fill="#0f3743" style='font-family:"Liberation Sans", sans-serif;' letter-spacing="0.6" textLength="38.50" lengthAdjust="spacingAndGlyphs">ZPanel</text>
<text x="321.00" y="382" font-size="10" font-weight="normal" fill="#0f3743" style='font-family:"Liberation Sans", sans-serif;' letter-spacing="0.6" textLength="27.50" lengthAdjust="spacingAndGlyphs">News</text>
<text x="363.00" y="370" font-size="10" font-weight="normal" fill="#0f3743" style='font-family:"Liberation Sans", sans-serif;' letter-spacing="0.6" textLength="62.50" lengthAdjust="spacingAndGlyphs">Permission</text>
<text x="363.00" y="382" font-size="10" font-weight="normal" fill="#0f3743" style='font-family:"Liberation Sans", sans-serif;' letter-spacing="0.6" textLength="49.50" lengthAdjust="spacingAndGlyphs">Manager</text>
<text x="427.00" y="376" font-size="10" font-weight="normal" fill="#0f3743" style='font-family:"Liberation Sans", sans-serif;' letter-spacing="0.6" textLength="47.50" lengthAdjust="spacingAndGlyphs">PHPInfo</text>
<text x="477.00" y="376" font-size="10" font-weight="normal" fill="#0f3743" style='font-family:"Liberation Sans", sans-serif;' letter-spacing="0.6" textLength="47.50" lengthAdjust="spacingAndGlyphs">Updates</text>
<text x="528.00" y="370" font-size="10" font-weight="normal" fill="#0f3743" style='font-family:"Liberation Sans", sans-serif;' letter-spacing="0.6" textLength="37.50" lengthAdjust="spacingAndGlyphs">ZPanel</text>
<text x="527.00" y="382" font-size="10" font-weight="normal" fill="#0f3743" style='font-family:"Liberation Sans", sans-serif;' letter-spacing="0.6" textLength="37.50" lengthAdjust="spacingAndGlyphs">Config</text>
<text x="279.00" y="479" font-size="10" font-weight="normal" fill="#0f3743" style='font-family:"Liberation Sans", sans-serif;' letter-spacing="0.6" textLength="42.50" lengthAdjust="spacingAndGlyphs">Backup</text>
<text x="324.00" y="473" font-size="10" font-weight="normal" fill="#0f3743" style='font-family:"Liberation Sans", sans-serif;' letter-spacing="0.6" textLength="27.50" lengthAdjust="spacingAndGlyphs">Cron</text>
<text x="324.00" y="485" font-size="10" font-weight="normal" fill="#0f3743" style='font-family:"Liberation Sans", sans-serif;' letter-spacing="0.6" textLength="49.50" lengthAdjust="spacingAndGlyphs">Manager</text>
<text x="376.00" y="479" font-size="10" font-weight="normal" fill="#0f3743" style='font-family:"Liberation Sans", sans-serif;' letter-spacing="0.6" textLength="32.50" lengthAdjust="spacingAndGlyphs">FAQ&#x27;s</text>
<text x="415.00" y="473" font-size="10" font-weight="normal" fill="#0f3743" style='font-family:"Liberation Sans", sans-serif;' letter-spacing="0.6" textLength="27.50" lengthAdjust="spacingAndGlyphs">Meta</text>
<text x="415.00" y="485" font-size="10" font-weight="normal" fill="#0f3743" style='font-family:"Liberation Sans", sans-serif;' letter-spacing="0.6" textLength="57.50" lengthAdjust="spacingAndGlyphs">Generator</text>
<text x="474.00" y="473" font-size="10" font-weight="normal" fill="#0f3743" style='font-family:"Liberation Sans", sans-serif;' letter-spacing="0.6" textLength="42.50" lengthAdjust="spacingAndGlyphs">Network</text>
<text x="475.00" y="485" font-size="10" font-weight="normal" fill="#0f3743" style='font-family:"Liberation Sans", sans-serif;' letter-spacing="0.6" textLength="30.50" lengthAdjust="spacingAndGlyphs">Tools</text>
<text x="521.00" y="473" font-size="10" font-weight="normal" fill="#0f3743" style='font-family:"Liberation Sans", sans-serif;' letter-spacing="0.6" textLength="40.50" lengthAdjust="spacingAndGlyphs">Service</text>
<text x="521.00" y="485" font-size="10" font-weight="normal" fill="#0f3743" style='font-family:"Liberation Sans", sans-serif;' letter-spacing="0.6" textLength="35.50" lengthAdjust="spacingAndGlyphs">status</text>
<text x="565.00" y="473" font-size="10" font-weight="normal" fill="#0f3743" style='font-family:"Liberation Sans", sans-serif;' letter-spacing="0.6" textLength="54.50" lengthAdjust="spacingAndGlyphs">Webalizer</text>
<text x="564.00" y="485" font-size="10" font-weight="normal" fill="#0f3743" style='font-family:"Liberation Sans", sans-serif;' letter-spacing="0.6" textLength="29.50" lengthAdjust="spacingAndGlyphs">Stats</text>
<text x="279.00" y="573" font-size="10" font-weight="normal" fill="#0f3743" style='font-family:"Liberation Sans", sans-serif;' letter-spacing="0.6" textLength="39.50" lengthAdjust="spacingAndGlyphs">MySQL</text>
<text x="279.00" y="585" font-size="10" font-weight="normal" fill="#0f3743" style='font-family:"Liberation Sans", sans-serif;' letter-spacing="0.6" textLength="60.50" lengthAdjust="spacingAndGlyphs">Databases</text>
<text x="343.00" y="579" font-size="10" font-weight="normal" fill="#0f3743" style='font-family:"Liberation Sans", sans-serif;' letter-spacing="0.6" textLength="72.50" lengthAdjust="spacingAndGlyphs">phpMyAdmin</text></svg></body></html>
